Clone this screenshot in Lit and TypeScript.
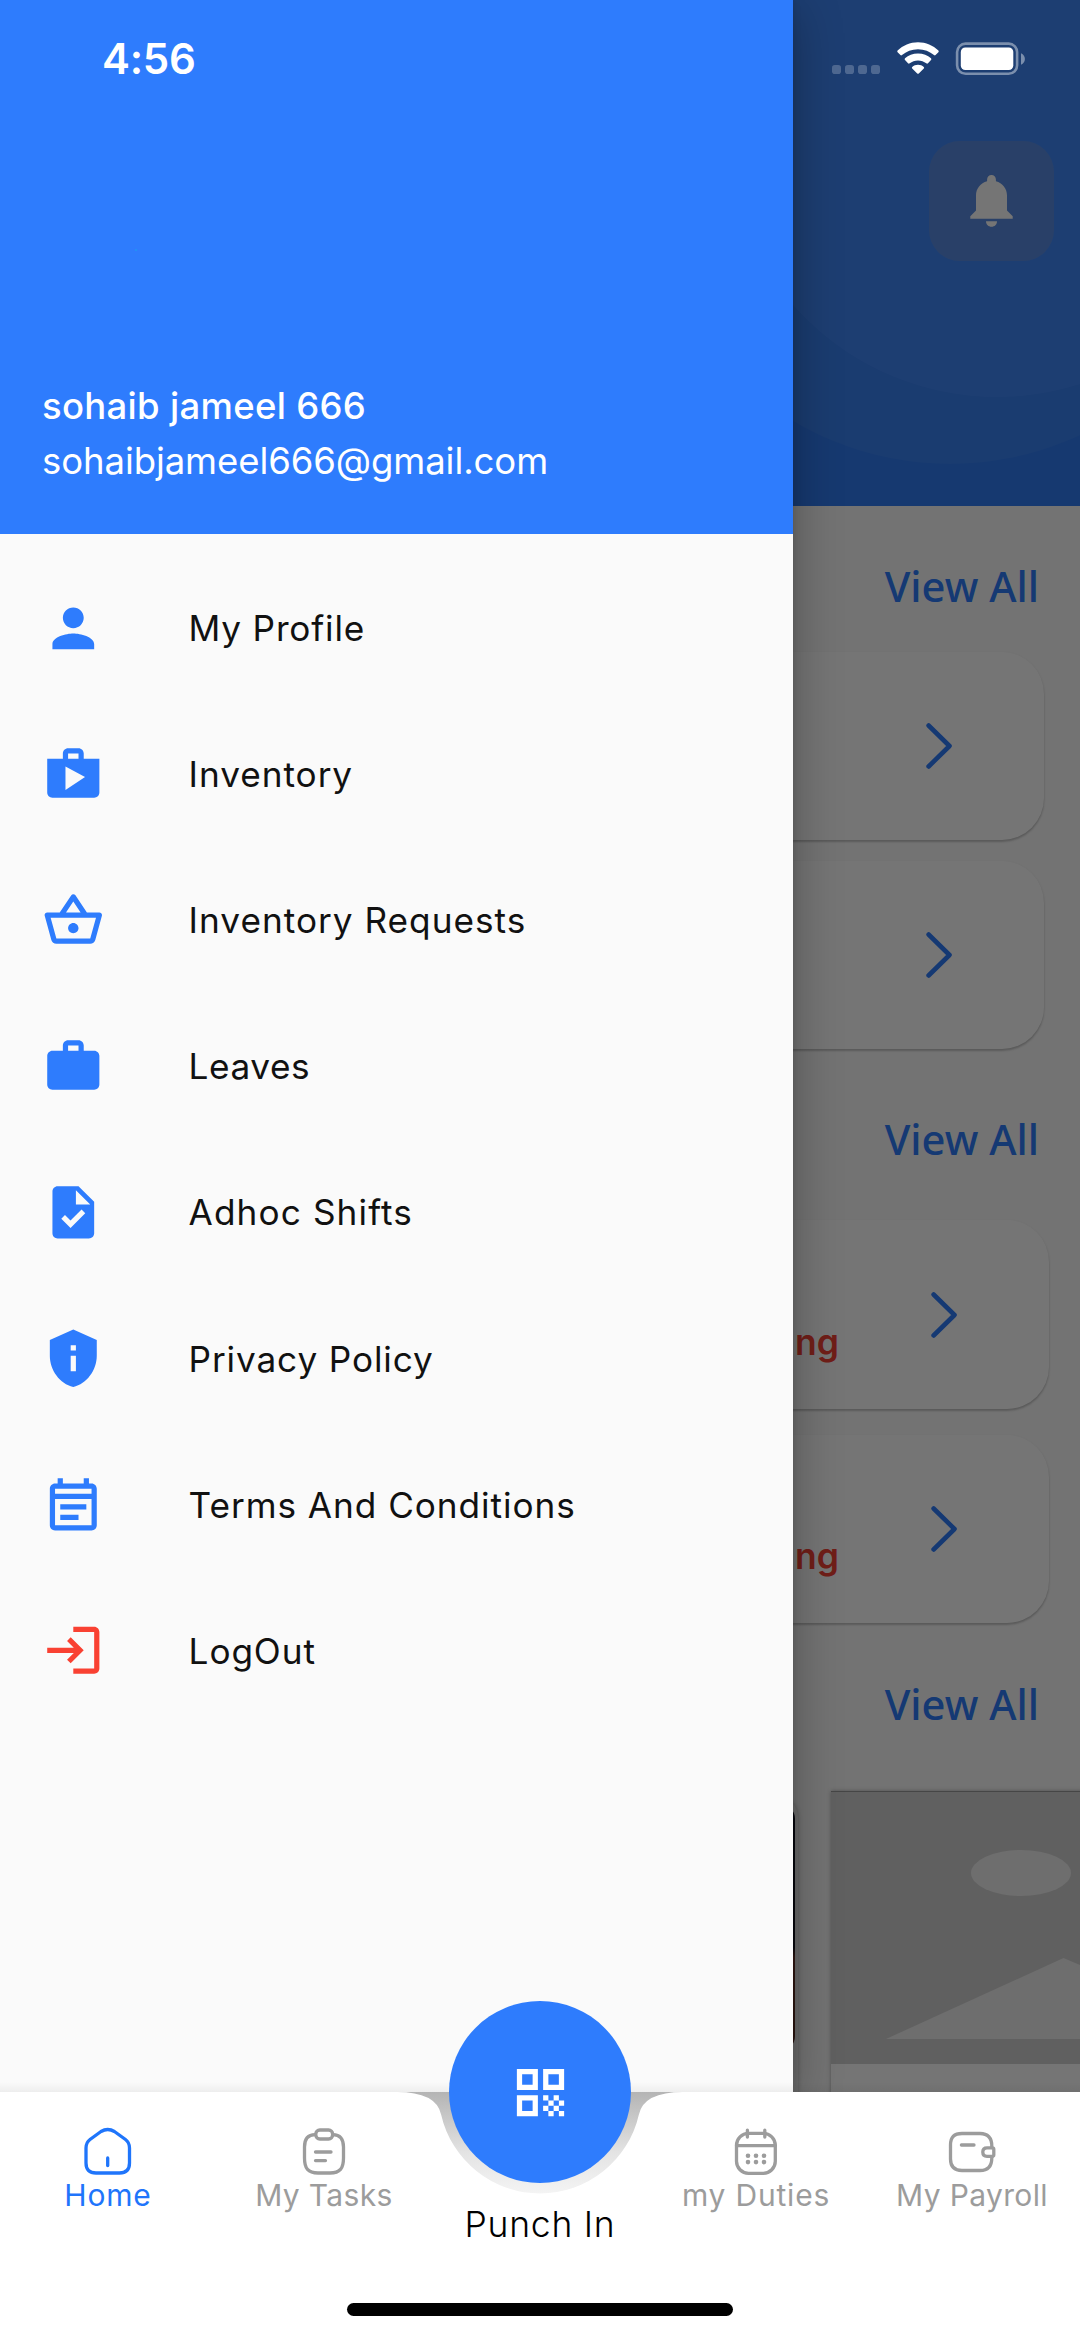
import { LitElement, html, css, svg } from "lit";
import { customElement } from "lit/decorators.js";

interface MenuEntry { label: string; path: string; track: string; danger?: boolean; }

const MENU: MenuEntry[] = [
  { label: "My Profile", track: "t1", path: "M12 12c2.21 0 4-1.79 4-4s-1.79-4-4-4-4 1.79-4 4 1.79 4 4 4zm0 2c-2.67 0-8 1.34-8 4v2h16v-2c0-2.66-5.33-4-8-4z" },
  { label: "Inventory", track: "t2", path: "M16 6V4c0-1.11-.89-2-2-2h-4c-1.11 0-2 .89-2 2v2H2v13c0 1.11.89 2 2 2h16c1.11 0 2-.89 2-2V6h-6zm-6-2h4v2h-4V4zM9 18V9l7.5 4L9 18z" },
  { label: "Inventory Requests", track: "t3", path: "M22 9h-4.79l-4.38-6.56c-.19-.28-.51-.42-.83-.42s-.64.14-.83.43L6.79 9H2c-.55 0-1 .45-1 1 0 .09.01.18.04.27l2.54 9.27c.23.84 1 1.46 1.92 1.46h13c.92 0 1.69-.62 1.93-1.46l2.54-9.27L23 10c0-.55-.45-1-1-1zM12 4.8L14.8 9H9.2L12 4.8zM18.5 19l-12.99.01L3.31 11H20.7l-2.2 8zM12 13c-1.1 0-2 .9-2 2s.9 2 2 2 2-.9 2-2-.9-2-2-2z" },
  { label: "Leaves", track: "t4", path: "M20 6h-4V4c0-1.11-.89-2-2-2h-4c-1.11 0-2 .89-2 2v2H4c-1.11 0-1.99.89-1.99 2L2 19c0 1.11.89 2 2 2h16c1.11 0 2-.89 2-2V8c0-1.11-.89-2-2-2zm-6 0h-4V4h4v2z" },
  { label: "Adhoc Shifts", track: "t5", path: "M14 2H6c-1.1 0-1.99.9-1.99 2L4 20c0 1.1.89 2 1.99 2H18c1.1 0 2-.9 2-2V8l-6-6zm-3.06 16L7.4 14.46l1.41-1.41 2.12 2.12 4.24-4.24 1.41 1.41L10.94 18zM13 9V3.5L18.5 9H13z" },
  { label: "Privacy Policy", track: "t6", path: "M12 1L3 5v6c0 5.55 3.84 10.74 9 12 5.16-1.26 9-6.45 9-12V5l-9-4zm-1 6h2v2h-2V7zm0 4h2v6h-2v-6z" },
  { label: "Terms And Conditions", track: "t7", path: "M19 4h-1V2h-2v2H8V2H6v2H5c-1.11 0-1.99.9-1.99 2L3 20c0 1.1.89 2 2 2h14c1.1 0 2-.9 2-2V6c0-1.1-.9-2-2-2zm0 16H5V10h14v10zm0-12H5V6h14v2zM7 12h10v2H7zm0 4h7v2H7z" },
  { label: "LogOut", track: "t8", danger: true, path: "M11 7L9.6 8.4l2.6 2.6H2v2h10.2l-2.6 2.6L11 17l5-5-5-5zm9 12h-8v2h8c1.1 0 2-.9 2-2V5c0-1.1-.9-2-2-2h-8v2h8v14z" },
];

const TAB_ICONS = {
  home: svg`<path d="M4 22Q4 16.5 8 13.5L19 5.5Q25.7 1.5 32.4 5.5L43.5 13.5Q47.5 16.5 47.5 22V37Q47.5 47 37.5 47H14Q4 47 4 37Z"/><path d="M25.7 32V39.5"/>`,
  tasks: svg`<path d="M17 8.6Q6.5 8.6 6.5 21V32Q6.5 40 9.5 43.4Q12.6 47 20 47H32Q39.4 47 42.5 43.4Q45.5 40 45.5 32V21Q45.5 8.6 35 8.6"/><rect x="17.8" y="4" width="16.8" height="9" rx="4"/><path d="M17.5 26H33M17.5 34.6H27.5"/>`,
  duties: svg`<rect x="6.5" y="7.3" width="38.8" height="40" rx="12"/><path d="M6.5 19.6H45.3M17.4 4.2V11M34.8 4.2V11"/><g fill="currentColor" stroke="none"><circle cx="18" cy="29.7" r="2.3"/><circle cx="26" cy="29.7" r="2.3"/><circle cx="34" cy="29.7" r="2.3"/><circle cx="18" cy="36.1" r="2.3"/><circle cx="26" cy="36.1" r="2.3"/><circle cx="34" cy="36.1" r="2.3"/></g>`,
  payroll: svg`<path d="M45.8 21.5V20Q45.8 7.5 34 7.5H16Q4.5 7.5 4.5 19V33Q4.5 44.5 16 44.5H34Q45.8 44.5 45.8 32V31"/><path d="M46.3 21.8H41Q36.8 21.8 36.8 26Q36.8 30.3 41 30.3H46.3Q47.8 30.3 47.8 28.8V23.3Q47.8 21.8 46.3 21.8Z"/><path d="M15.4 19H28"/>`,
};

@customElement("chevron-icon")
class ChevronIcon extends LitElement {
  static styles = css`
    :host { display: block; width: 28px; height: 46px; }
    .shape { display: block; }
  `;
  render() {
    return html`<svg class="shape" width="28" height="46" viewBox="0 0 28 46" fill="none" stroke="#2e7cfb" stroke-width="4.6" stroke-linecap="round" stroke-linejoin="round"><path d="M2.6 2.5L23.5 23L2.6 43.5"/></svg>`;
  }
}

@customElement("app-root")
class AppRoot extends LitElement {
  static styles = css`
    :host { display: block; font-family: Inter, "Liberation Sans", sans-serif; }
    svg { display: block; flex: none; }
    .screen { position: relative; width: 1080px; height: 2337px; overflow: hidden; background: #fafafa; }

    .page { display: flex; flex-direction: column; height: 2092px; overflow: hidden; }
    .hero { position: relative; flex: none; height: 506px; background: #307cf3; overflow: hidden; display: flex; justify-content: flex-end; align-items: flex-start; padding: 141px 26px 0 0; box-sizing: border-box; }
    .orb { position: absolute; border-radius: 50%; }
    .orb-outer { left: 642px; top: -152px; width: 616px; height: 616px; background: #3a83f3; }
    .orb-inner { left: 725px; top: -147px; width: 544px; height: 544px; background: #4188f9; }
    .bell { position: relative; width: 125px; height: 120px; border-radius: 31px; background: #5b8de2; display: flex; align-items: center; justify-content: center; }
    .heading { flex: none; display: flex; justify-content: flex-end; padding-right: 41px; height: 60px; line-height: 60px; font-family: "Noto Sans", sans-serif; font-weight: 500; font-size: 41.7px; color: #2e7cfb; }
    .h1 { margin-top: 50px; }
    .h2 { margin-top: 60px; }
    .h3 { margin-top: 51px; }
    .card { flex: none; display: flex; justify-content: flex-end; align-items: center; box-sizing: border-box; height: 188px; margin: 0 36.5px 0 36px; padding-right: 90px; border-radius: 42px; background: #fff; box-shadow: 0 2px 2px rgba(0,0,0,.18), 0 1px 3px rgba(0,0,0,.07); }
    .c1 { margin-top: 36px; }
    .c2 { margin-top: 21px; }
    .shift { margin-right: 31px; height: 189px; padding-right: 90px; gap: 92px; }
    .c3 { margin-top: 51px; }
    .c4 { margin-top: 26px; height: 188px; }
    .state { color: #f44336; font-weight: 600; font-size: 35.5px; line-height: 44px; margin-top: 56px; }
    .strip { flex: none; display: flex; align-items: flex-start; margin-top: 57px; padding-left: 240px; gap: 33px; }
    .photo-card { flex: none; box-sizing: border-box; width: 558px; height: 330px; margin-top: 6px; padding: 6px 3px 0; border-radius: 20px 20px 0 0; background: #ededed; box-shadow: 0 0 4px rgba(0,0,0,.25); }
    .photo { height: 249px; border-radius: 16px; background: linear-gradient(#0c0e1c 0%, #14141f 58%, #6b3428 62%, #5a2c22 100%); }
    .ph-card { flex: none; width: 420px; height: 330px; background: #fff; box-shadow: 0 0 4px rgba(0,0,0,.3); border-top: 1px solid #999; box-sizing: border-box; }

    .scrim { position: absolute; inset: 0 0 245px 0; background: rgba(0,0,0,.54); }

    .drawer { position: absolute; left: 0; top: 0; width: 793px; height: 2092px; background: #fafafa; box-shadow: 0 10px 46px rgba(0,0,0,.3), 0 0 8px rgba(0,0,0,.12); }
    .account { position: relative; box-sizing: border-box; height: 534px; background: #2e7cfd; color: #fff; padding: 379px 0 0 42px; display: flex; flex-direction: column; font-size: 36.5px; line-height: 55px; white-space: nowrap; }
    .avatar { position: absolute; left: 135px; top: 249px; width: 2px; height: 2px; border-radius: 50%; background: #2196f3; }
    .name { font-weight: 550; letter-spacing: .3px; }
    .mail { letter-spacing: -.08px; }
    .menu { padding-top: 21px; }
    .item { display: flex; align-items: center; height: 146.1px; padding-left: 42px; gap: 84px; color: #111; font-size: 35.2px; white-space: nowrap; }
    .glyph { fill: #2e7cfd; }
    .danger { fill: #f94132; }

    .status { position: absolute; left: 0; top: 0; width: 1080px; height: 118px; display: flex; justify-content: space-between; }
    .clock { padding: 34px 0 0 102px; font-size: 42px; line-height: 50px; font-weight: 570; letter-spacing: -.3px; color: #fff; }

    .nav { position: absolute; left: 0; top: 2092px; width: 1080px; height: 245px; }
    .bar { position: absolute; left: 0; top: -10px; }
    .tabs { position: relative; display: grid; grid-template-columns: repeat(5, 216px); height: 190px; }
    .tab { display: flex; flex-direction: column; align-items: center; padding-top: 34px; color: #9c9c9c; font-size: 30px; line-height: 38px; font-weight: 380; letter-spacing: .35px; white-space: nowrap; }
    .tab svg { fill: none; stroke: currentColor; stroke-width: 3.3; stroke-linecap: round; stroke-linejoin: round; }
    .tab-label { margin-top: -2px; }
    .wide { letter-spacing: .8px; }
    .active { color: #1f75fb; }
    .center { display: flex; justify-content: center; padding-top: 111px; font-size: 35.5px; line-height: 44px; color: #000; font-weight: 350; letter-spacing: .75px; white-space: nowrap; }
    .fab { position: absolute; left: 449px; top: 2001px; width: 182px; height: 182px; border-radius: 50%; background: #2e7cfd; display: flex; align-items: center; justify-content: center; }
    .indicator { width: 386px; height: 13px; border-radius: 7px; background: #000; margin: 21px auto 0; position: relative; }
    .t1 { letter-spacing: .8px; }
    .t2 { letter-spacing: .95px; }
    .t3 { letter-spacing: 1px; }
    .t4 { letter-spacing: .55px; }
    .t5 { letter-spacing: 1.1px; }
    .t6 { letter-spacing: .87px; }
    .t7 { letter-spacing: .95px; }
    .t8 { letter-spacing: .9px; }
  `;

  private statusIcons() {
    return html`<svg width="260" height="118" viewBox="820 0 260 118">
      <g fill="#fff" fill-opacity=".22">${[832, 845, 858, 871].map((x) => svg`<rect x=${x} y="65" width="9" height="9" rx="2.8"/>`)}</g>
      <g fill="#fff">
        <path d="M918 42.2C926 42.2 933 45.4 938.4 50.5Q939.2 51.4 938.4 52.2L935.6 55.1Q934.8 55.8 934 55.1C929.7 51.4 924.3 49.2 918 49.2S906.3 51.4 902 55.1Q901.2 55.8 900.4 55.1L897.6 52.2Q896.8 51.4 897.6 50.5C903 45.4 910 42.2 918 42.2Z"/>
        <path d="M918 53.4C923.2 53.4 927.6 55.3 931 58.3Q931.8 59.2 931 60L928 63.2Q927.2 64 926.3 63.3C924 61.4 921.2 60.4 918 60.4S912 61.4 909.7 63.3Q908.8 64 908 63.2L905 60Q904.2 59.2 905 58.3C908.4 55.3 912.8 53.4 918 53.4Z"/>
        <path d="M918 64.8C920.3 64.8 922.3 65.6 923.8 66.9Q924.5 67.7 923.8 68.4L918.8 73.5Q918 74.2 917.2 73.5L912.2 68.4Q911.5 67.7 912.2 66.9C913.7 65.6 915.7 64.8 918 64.8Z"/>
        <rect x="960.8" y="47.5" width="52.5" height="22.5" rx="4.5"/>
      </g>
      <rect x="957.1" y="43.6" width="60" height="30.2" rx="8.5" fill="none" stroke="#fff" stroke-opacity=".42" stroke-width="2.6"/>
      <path d="M1021 53.2C1026.2 55.6 1026.2 62.4 1021 64.8Z" fill="#fff" fill-opacity=".42"/>
    </svg>`;
  }

  render() {
    return html`
      <div class="screen">
        <div class="page">
          <div class="hero">
            <div class="orb orb-outer"></div>
            <div class="orb orb-inner"></div>
            <div class="bell">
              <svg width="43" height="52" viewBox="0 0 43 52" fill="#fff"><path d="M21.5 0C24 0 25.9 1.9 25.9 4.5V6.3C32.5 8.2 37 13.5 37 20.5V35.6L42.7 41.3V43.7H.3V41.3L6 35.6V20.5C6 13.5 10.5 8.2 17.1 6.3V4.5C17.1 1.9 19 0 21.5 0Z"/><path d="M16 46.2H27C27 49.5 24.5 51.7 21.5 51.7S16 49.5 16 46.2Z"/></svg>
            </div>
          </div>
          <div class="heading h1">View All</div>
          <div class="card c1"><chevron-icon></chevron-icon></div>
          <div class="card c2"><chevron-icon></chevron-icon></div>
          <div class="heading h2">View All</div>
          <div class="card shift c3"><span class="state">ng</span><chevron-icon></chevron-icon></div>
          <div class="card shift c4"><span class="state">ng</span><chevron-icon></chevron-icon></div>
          <div class="heading h3">View All</div>
          <div class="strip">
            <div class="photo-card"><div class="photo"></div></div>
            <div class="ph-card">
              <svg width="420" height="272" viewBox="0 0 420 272"><rect width="420" height="272" fill="#d1d1d1"/><ellipse cx="190" cy="81" rx="50" ry="23" fill="#efefef"/><path d="M55 247L232.5 166L249 173L330 208L400 247Z" fill="#efefef"/></svg>
            </div>
          </div>
        </div>

        <div class="scrim"></div>

        <div class="drawer">
          <div class="account">
            <span class="avatar"></span>
            <span class="name">sohaib jameel 666</span>
            <span class="mail">sohaibjameel666@gmail.com</span>
          </div>
          <div class="menu">
            ${MENU.map((m) => html`<div class="item">
              <svg class=${m.danger ? "danger" : "glyph"} width="62.6" height="62.6" viewBox="0 0 24 24"><path d=${m.path}></path></svg>
              <span class=${m.track}>${m.label}</span>
            </div>`)}
          </div>
        </div>

        <div class="nav">
          <svg class="bar" width="1080" height="255" viewBox="0 -10 1080 255">
            <defs>
              <linearGradient id="edge" x1="0" y1="0" x2="0" y2="1"><stop offset="0" stop-opacity="0"/><stop offset="1" stop-opacity=".05"/></linearGradient>
              <linearGradient id="well" gradientUnits="userSpaceOnUse" x1="0" y1="0" x2="0" y2="102"><stop offset="0" stop-color="#b4b4b4"/><stop offset=".25" stop-color="#c8c8c8"/><stop offset=".6" stop-color="#e4e4e4"/><stop offset="1" stop-color="#f4f4f4"/></linearGradient>
            </defs>
            <rect y="-10" width="1080" height="10" fill="url(#edge)"/>
            <rect x="390" y="0" width="300" height="110" fill="url(#well)"/>
            <path fill="#fff" d="M0 0H397Q436 0 441.1 22.4A101.4 101.4 0 0 0 638.9 22.4Q644 0 683 0H1080V245H0Z"/>
          </svg>
          <div class="tabs">
            <div class="tab active"><svg width="52" height="52" viewBox="0 0 52 52">${TAB_ICONS.home}</svg><span class="tab-label wide">Home</span></div>
            <div class="tab"><svg width="52" height="52" viewBox="0 0 52 52">${TAB_ICONS.tasks}</svg><span class="tab-label">My Tasks</span></div>
            <div class="center"><span>Punch In</span></div>
            <div class="tab"><svg width="52" height="52" viewBox="0 0 52 52">${TAB_ICONS.duties}</svg><span class="tab-label wide">my Duties</span></div>
            <div class="tab"><svg width="52" height="52" viewBox="0 0 52 52">${TAB_ICONS.payroll}</svg><span class="tab-label">My Payroll</span></div>
          </div>
          <div class="indicator"></div>
        </div>

        <div class="fab">
          <svg width="63" height="63" viewBox="0 0 24 24" fill="#fff"><path fill-rule="evenodd" d="M3 11h8V3H3v8zm2-6h4v4H5V5zM3 21h8v-8H3v8zm2-6h4v4H5v-4zM13 3v8h8V3h-8zm6 6h-4V5h4v4zM19 19h2v2h-2zM13 13h2v2h-2zM15 15h2v2h-2zM13 17h2v2h-2zM15 19h2v2h-2zM17 17h2v2h-2zM17 13h2v2h-2zM19 15h2v2h-2z"/></svg>
        </div>

        <div class="status">
          <span class="clock">4:56</span>
          ${this.statusIcons()}
        </div>
      </div>
    `;
  }
}
